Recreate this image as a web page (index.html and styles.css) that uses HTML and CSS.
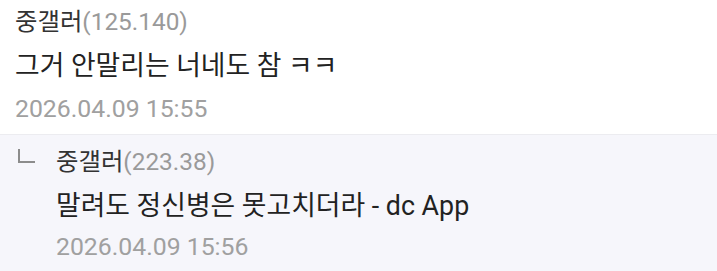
FILE: index.html
```html
<!DOCTYPE html>
<html lang="ko">
<head>
<meta charset="utf-8">
<link rel="stylesheet" href="styles.css">
</head>
<body>
<div class="comment">
  <div class="head"><span class="nick">중갤러</span><span class="ip">(125.140)</span></div>
  <div class="text">그거 안말리는 너네도 참 ㅋㅋ</div>
  <div class="date">2026.04.09 15:55</div>
</div>
<div class="reply">
  <span class="mark"></span>
  <div class="body">
    <div class="head"><span class="nick">중갤러</span><span class="ip">(223.38)</span></div>
    <div class="text">말려도 정신병은 못고치더라 - dc App</div>
    <div class="date">2026.04.09 15:56</div>
  </div>
</div>
</body>
</html>
```
FILE: styles.css
```css
html, body {
  margin: 0;
  padding: 0;
  background: #ffffff;
}
body {
  font-family: Roboto, "Noto Sans CJK KR", sans-serif;
  color: #222222;
}
.comment {
  padding: 0 15px;
  height: 135px;
  box-sizing: border-box;
  border-bottom: 1px solid #ececf0;
}
.head {
  font-size: 24.4px;
  height: 44px;
  line-height: 44px;
}
.nick { color: #333333; }
.ip { color: #9a9a9a; }
.text {
  font-size: 26.8px;
  height: 44px;
  line-height: 44px;
  color: #222222;
}
.date {
  font-size: 24.8px;
  height: 42px;
  line-height: 42px;
  color: #a0a0a0;
}
.reply {
  display: flex;
  background: #f6f6fb;
  height: 136px;
  padding: 5px 0 0 18px;
  box-sizing: border-box;
}
.reply .date {
  height: 38px;
  line-height: 38px;
}
.mark {
  width: 15px;
  height: 12px;
  margin-top: 9px;
  border-left: 2px solid #8c8c8c;
  border-bottom: 2px solid #8c8c8c;
  flex: none;
}
.body {
  margin-left: 21px;
}
```
